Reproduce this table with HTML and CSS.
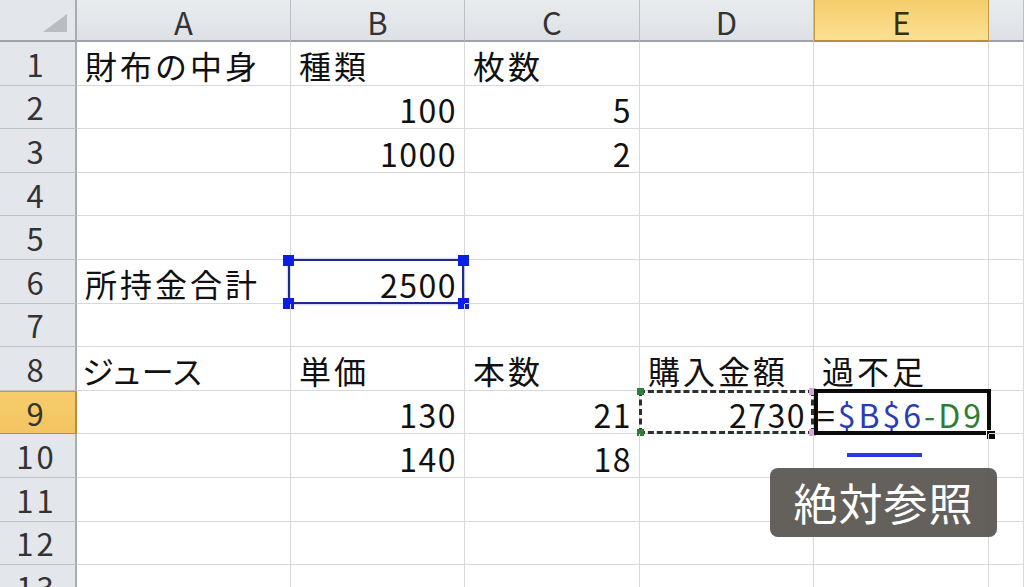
FILE: index.html
```html
<!DOCTYPE html>
<html lang="ja">
<head>
<meta charset="utf-8">
<title>絶対参照</title>
<link rel="stylesheet" href="styles.css">
</head>
<body>
<div class="sheet">
  <div class="corner"><span class="tri"></span></div>
  <div class="ch">A</div><div class="ch">B</div><div class="ch">C</div><div class="ch">D</div><div class="ch ch-sel">E</div><div class="ch"></div>

  <div class="rh">1</div><div class="c">財布の中身</div><div class="c">種類</div><div class="c">枚数</div><div class="c"></div><div class="c"></div><div class="c"></div>
  <div class="rh">2</div><div class="c"></div><div class="c n">100</div><div class="c n">5</div><div class="c"></div><div class="c"></div><div class="c"></div>
  <div class="rh">3</div><div class="c"></div><div class="c n">1000</div><div class="c n">2</div><div class="c"></div><div class="c"></div><div class="c"></div>
  <div class="rh">4</div><div class="c"></div><div class="c"></div><div class="c"></div><div class="c"></div><div class="c"></div><div class="c"></div>
  <div class="rh">5</div><div class="c"></div><div class="c"></div><div class="c"></div><div class="c"></div><div class="c"></div><div class="c"></div>
  <div class="rh">6</div><div class="c">所持金合計</div><div class="c n ref-blue">2500<span class="h h-tl"></span><span class="h h-tr"></span><span class="h h-bl"></span><span class="h h-br"></span></div><div class="c"></div><div class="c"></div><div class="c"></div><div class="c"></div>
  <div class="rh">7</div><div class="c"></div><div class="c"></div><div class="c"></div><div class="c"></div><div class="c"></div><div class="c"></div>
  <div class="rh">8</div><div class="c kana">ジュース</div><div class="c">単価</div><div class="c">本数</div><div class="c">購入金額</div><div class="c">過不足</div><div class="c"></div>
  <div class="rh rh-sel">9</div><div class="c"></div><div class="c n">130</div><div class="c n">21</div><div class="c n ref-green">2730<span class="g g-tl"></span><span class="g g-tr"></span><span class="g g-bl"></span><span class="g g-br"></span></div><div class="c active"><span class="f-op">=</span><span class="f-abs">$B$6</span><span class="f-rel">-D9</span><span class="fill"></span></div><div class="c"></div>
  <div class="rh">10</div><div class="c"></div><div class="c n">140</div><div class="c n">18</div><div class="c"></div><div class="c"></div><div class="c"></div>
  <div class="rh">11</div><div class="c"></div><div class="c"></div><div class="c"></div><div class="c"></div><div class="c"></div><div class="c"></div>
  <div class="rh">12</div><div class="c"></div><div class="c"></div><div class="c"></div><div class="c"></div><div class="c"></div><div class="c"></div>
  <div class="rh rh-cut">13</div><div class="c"></div><div class="c"></div><div class="c"></div><div class="c"></div><div class="c"></div><div class="c"></div>

  <div class="underline"></div>
  <div class="caption">絶対参照</div>
</div>
</body>
</html>
```

FILE: styles.css
```css
html, body {
  margin: 0;
  padding: 0;
  background: #ffffff;
}

.sheet {
  position: relative;
  width: 1024px;
  height: 587px;
  overflow: hidden;
  display: grid;
  grid-template-columns: 77px 214px 174px 175px 174px 175px 35px;
  grid-template-rows: 42px repeat(13, 43.6px);
  font-family: "Noto Sans CJK JP", "Noto Sans", sans-serif;
  color: #111;
}

.corner {
  position: relative;
  background: #e3e6ea;
  border-right: 2px solid #a9adb2;
  border-bottom: 2px solid #9fa3a8;
  box-sizing: border-box;
}
.tri {
  position: absolute;
  right: 8px;
  bottom: 8px;
  width: 0;
  height: 0;
  border-left: 24px solid transparent;
  border-bottom: 18px solid #b9bdc2;
}

.ch {
  box-sizing: border-box;
  background: linear-gradient(#e9ecef, #dde1e5);
  border-right: 1px solid #bcc0c4;
  border-bottom: 2px solid #9fa3a8;
  display: flex;
  align-items: center;
  justify-content: center;
  padding-top: 3px;
  font-size: 31px;
  color: #333;
  line-height: 1;
}
.ch-sel {
  background: linear-gradient(#f6cd6b, #fbe093);
  border-right: 1px solid #c59a45;
  border-left: 1px solid #c59a45;
  border-bottom: 2px solid #b98d3b;
  color: #3a2e10;
}

.rh {
  box-sizing: border-box;
  background: #e3e6ea;
  border-right: 2px solid #a9adb2;
  border-bottom: 1px solid #bfc3c7;
  display: flex;
  align-items: center;
  justify-content: center;
  padding-right: 2px;
  font-size: 31px;
  color: #333;
  line-height: 1;
  letter-spacing: 3px;
}
.rh-cut {
  align-items: flex-start;
  padding-top: 6px;
}
.rh-sel {
  background: linear-gradient(#f6cd6b, #f3c462);
  border-top: 1px solid #c59a45;
  border-bottom: 1px solid #b98d3b;
  border-right: 2px solid #b98d3b;
}

.c {
  position: relative;
  box-sizing: border-box;
  border-right: 1px solid #d8d9da;
  border-bottom: 1px solid #d8d9da;
  display: flex;
  align-items: flex-end;
  padding: 0 6px 4px 8px;
  font-size: 32px;
  line-height: 1;
  letter-spacing: 3px;
  white-space: nowrap;
}
.kana {
  letter-spacing: -1px;
  padding-left: 5px;
}
.n {
  justify-content: flex-end;
  letter-spacing: 1.5px;
  padding-right: 7px;
  padding-bottom: 3px;
}

/* referenced cell B6 (blue) */
.ref-blue::before {
  content: "";
  position: absolute;
  left: -3px;
  top: -1px;
  right: 0;
  bottom: -1px;
  border: 2px solid #1f2c86;
  box-shadow: 0 0 2px #8090ff;
  pointer-events: none;
}
.h {
  position: absolute;
  width: 11px;
  height: 11px;
  background: #0a1ee6;
}
.h-tl { left: -8px; top: -5px; }
.h-tr { right: -5px; top: -5px; }
.h-bl { left: -8px; bottom: -6px; }
.h-br { right: -5px; bottom: -6px; }

/* referenced cell D9 (green, dashed) */
.ref-green::before {
  content: "";
  position: absolute;
  left: -1px;
  top: -1px;
  right: -1px;
  bottom: -1px;
  border: 3px dashed #2a322b;
  pointer-events: none;
}
.g {
  position: absolute;
  width: 7px;
  height: 7px;
  background: #2f7f3a;
}
.g-tl { left: -3px; top: -3px; }
.g-bl { left: -3px; bottom: -3px; }
.g-tr { right: -3px; top: -3px; background: #d9a6d9; }
.g-br { right: -3px; bottom: -3px; background: #d9a6d9; }

/* active cell E9 */
.active {
  padding-left: 3px;
  letter-spacing: 3px;
  padding-bottom: 3px;
}
.active::before {
  content: "";
  position: absolute;
  left: 0;
  top: -2px;
  right: -3px;
  bottom: -2px;
  border: 4px solid #0a0a0a;
  pointer-events: none;
}
.fill {
  position: absolute;
  right: -8px;
  bottom: -7px;
  width: 8px;
  height: 8px;
  background: #0a0a0a;
  border: 1px solid #fff;
}
.f-op { color: #111; }
.f-abs { color: #2b3bb8; }
.f-rel { color: #2e7d32; }

.underline {
  position: absolute;
  left: 847px;
  top: 453px;
  width: 75px;
  height: 4px;
  background: #2b3be0;
}

.caption {
  position: absolute;
  left: 770px;
  top: 468px;
  width: 227px;
  height: 69px;
  border-radius: 8px;
  background: rgba(88, 84, 80, 0.93);
  color: #ffffff;
  font-size: 44px;
  line-height: 69px;
  text-align: center;
  letter-spacing: 1px;
}
```
